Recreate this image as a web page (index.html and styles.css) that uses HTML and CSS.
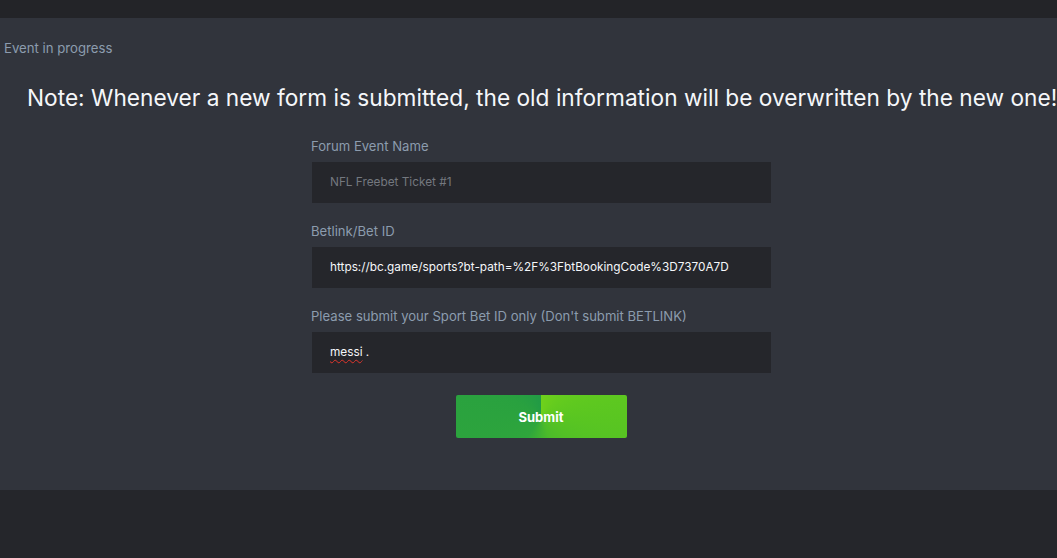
FILE: index.html
```html
<!doctype html>
<html lang="en">
    <head>
        <meta charset="utf8">
        <link rel="stylesheet" href="styles.css">
    </head>
    <body>
        <div class="top-bar"></div>
        <main class="panel">
            <p class="status">Event in progress</p>
            <h2 class="note">Note: Whenever a new form is submitted, the old information will be overwritten by the new one!</h2>
            <form class="event-form">
                <label class="field">
                    <span class="field-label">Forum Event Name</span>
                    <input class="field-input" type="text" placeholder="NFL Freebet Ticket #1">
                </label>
                <label class="field">
                    <span class="field-label">Betlink/Bet ID</span>
                    <input class="field-input" type="text" value="https://bc.game/sports?bt-path=%2F%3FbtBookingCode%3D7370A7D">
                </label>
                <label class="field">
                    <span class="field-label">Please submit your Sport Bet ID only (Don't submit BETLINK)</span>
                    <span class="field-input"><span class="typo">messi</span> .</span>
                </label>
                <button class="submit" type="button">Submit</button>
            </form>
        </main>
    </body>
</html>
```

FILE: styles.css
```css
html {
    min-height: 100%;
}
body {
    background-color: #25262b;
    font-family: Inter, "Noto Sans", sans-serif;
    margin: 0;
    min-height: 558px;
    overflow: hidden;
}
.top-bar {
    background-color: #232428;
    height: 18px;
}
.panel {
    background-color: #31343c;
    height: 472px;
    overflow: hidden;
}
.status {
    color: #8c9cae;
    font-size: 13.2px;
    line-height: 16px;
    margin: 0;
    padding: 22px 0 0 4px;
}
.note {
    color: #f5f7fa;
    font-size: 22.7px;
    font-weight: 400;
    line-height: 28px;
    margin: 28px 0 0;
    padding-left: 27px;
    white-space: nowrap;
}
.event-form {
    display: flex;
    flex-direction: column;
    margin: 26px 0 0 calc(50% - 217.5px);
    width: 460px;
}
.field {
    display: flex;
    flex-direction: column;
    margin-bottom: 20px;
}
.field-label {
    color: #8c9cae;
    font-size: 13.1px;
    line-height: 16px;
    margin-bottom: 8px;
}
.field-input {
    background-color: #25262b;
    border: 0;
    box-sizing: border-box;
    color: #f5f7fa;
    display: block;
    font-family: inherit;
    font-size: 11.8px;
    height: 41px;
    line-height: 41px;
    margin-left: 1px;
    outline: none;
    padding: 0 18px;
    width: 459px;
}
.field-input::placeholder {
    color: #74787f;
}
.typo {
    text-decoration: underline wavy #e0342b;
    text-decoration-thickness: 1px;
    text-underline-offset: 3px;
}
.submit {
    align-self: center;
    background-image: conic-gradient(from 0deg at 50% 50%, #6fd11b 0deg, #5ac621 90deg, #4cbb2a 160deg, #2fa63c 215deg, #29a13f 300deg, #219a46 360deg);
    border: 0;
    border-radius: 2px;
    color: #fff;
    cursor: pointer;
    font-family: inherit;
    font-size: 13px;
    font-weight: 700;
    height: 43px;
    margin-top: 2px;
    width: 171px;
}
```
